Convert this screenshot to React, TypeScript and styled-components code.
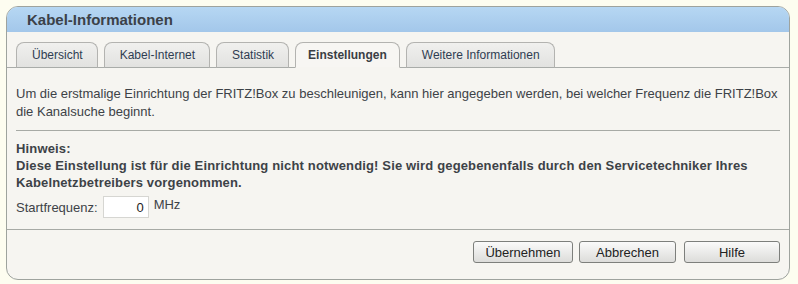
import React from "react";
import styled, { createGlobalStyle } from "styled-components";

export default function App() {
  return (
    <>
      <GlobalStyle />
      <Frame>
        <Header>Kabel-Informationen</Header>
        <Body>
          <TabBar>
            {tabs.map((tab) => (
              <Tab key={tab} $active={tab === "Einstellungen"}>
                {tab}
              </Tab>
            ))}
          </TabBar>
          <Content>
            <Intro>
              Um die erstmalige Einrichtung der FRITZ!Box zu beschleunigen, kann hier angegeben
              werden, bei welcher Frequenz die FRITZ!Box die Kanalsuche beginnt.
            </Intro>
            <Rule />
            <Notice>
              Hinweis:
              <br />
              Diese Einstellung ist für die Einrichtung nicht notwendig! Sie wird gegebenenfalls
              durch den Servicetechniker Ihres Kabelnetzbetreibers vorgenommen.
            </Notice>
            <FieldRow>
              <Label htmlFor="start">Startfrequenz:</Label>
              <NumberInput id="start" defaultValue="0" />
              <Unit>MHz</Unit>
            </FieldRow>
          </Content>
          <ButtonBar>
            <Button $width={100}>Übernehmen</Button>
            <Button $width={97}>Abbrechen</Button>
            <Button $width={96} $gap={8}>
              Hilfe
            </Button>
          </ButtonBar>
        </Body>
      </Frame>
    </>
  );
}

// Reiter
const tabs = ["Übersicht", "Kabel-Internet", "Statistik", "Einstellungen", "Weitere Informationen"];

const GlobalStyle = createGlobalStyle`
  html, body {
    margin: 0;
    background: #fdfdf0;
  }
  body {
    padding: 6px;
    font-family: "Liberation Sans", Arial, sans-serif;
  }
`;

const Frame = styled.div`
  width: 784px;
  height: 274px;
  box-sizing: border-box;
  border: 1px solid #9ea39e;
  border-radius: 12px;
  overflow: hidden;
  background: #f6f5f1;
  display: flex;
  flex-direction: column;
`;

const Header = styled.div`
  height: 25px;
  flex-shrink: 0;
  padding-left: 20px;
  display: flex;
  align-items: center;
  background: linear-gradient(#b6d7f3, #a3c7ea);
  font-size: 15px;
  font-weight: bold;
  color: #3b4148;
`;

const Body = styled.div`
  flex: 1;
  display: flex;
  flex-direction: column;
`;

const TabBar = styled.div`
  display: flex;
  gap: 6px;
  margin-top: 10px;
  padding-left: 9px;
  border-bottom: 1px solid #a9aca9;
`;

const Tab = styled.div<{ $active?: boolean }>`
  height: 26px;
  padding: ${(p) => (p.$active ? "0 12px" : "0 14px 0 15px")};
  margin-bottom: -1px;
  display: flex;
  align-items: center;
  border: 1px solid #b3b3b0;
  border-bottom-color: ${(p) => (p.$active ? "#f6f5f1" : "#a9aca9")};
  border-radius: 8px 8px 0 0;
  background: ${(p) => (p.$active ? "#f7f6f3" : "linear-gradient(#f0f0ee, #e2e2e0)")};
  font-size: 12px;
  font-weight: ${(p) => (p.$active ? "bold" : "normal")};
  color: ${(p) => (p.$active ? "#3a3e44" : "#2f3d52")};
  box-sizing: border-box;
`;

const Content = styled.div`
  flex: 1;
  padding: 17px 9px 0 9px;
  font-size: 13px;
  color: #3d4247;
`;

const Intro = styled.p`
  margin: 0;
  line-height: 18px;
`;

const Rule = styled.div`
  height: 1px;
  background: #a7aaa5;
  margin: 9px 0 9px;
`;

const Notice = styled.p`
  margin: 0;
  font-weight: bold;
  line-height: 17px;
  letter-spacing: 0.15px;
`;

const FieldRow = styled.div`
  display: flex;
  align-items: center;
  gap: 5px;
  margin-top: 5px;
`;

const Label = styled.label`
  font-size: 13px;
`;

const NumberInput = styled.input`
  width: 46px;
  height: 22px;
  box-sizing: border-box;
  border: 1px solid #d6d6d2;
  background: #fff;
  text-align: right;
  padding: 0 4px;
  font-family: inherit;
  font-size: 13px;
  color: #222;
`;

const Unit = styled.span`
  align-self: flex-start;
  margin-top: 1px;
  font-size: 13px;
`;

const ButtonBar = styled.div`
  display: flex;
  justify-content: flex-end;
  padding: 11px 9px 16px;
  border-top: 1px solid #a7aaa5;
`;

const Button = styled.button<{ $width: number; $gap?: number }>`
  width: ${(p) => p.$width}px;
  height: 22px;
  margin-left: ${(p) => p.$gap ?? 6}px;
  border: 1px solid #7d7f7c;
  border-radius: 3px;
  background: linear-gradient(#fafafa, #dcdcda);
  font-family: inherit;
  font-size: 13px;
  color: #222;
  padding: 0;
`;
